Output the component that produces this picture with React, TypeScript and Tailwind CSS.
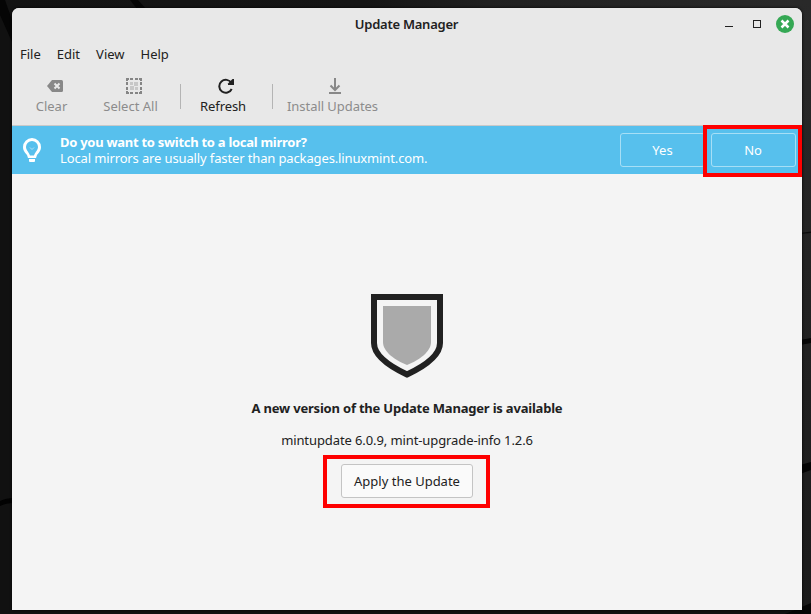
import type { ReactNode } from "react";

function Wallpaper() {
  return (
    <svg className="absolute inset-0" width="811" height="614" viewBox="0 0 811 614">
      <defs>
        <linearGradient id="top" x1="0" x2="1" y1="0" y2="0">
          <stop offset="0" stopColor="#131313" />
          <stop offset="0.45" stopColor="#151515" />
          <stop offset="0.6" stopColor="#202020" />
          <stop offset="1" stopColor="#2a2a2a" />
        </linearGradient>
        <linearGradient id="right" x1="0" x2="0" y1="0" y2="1">
          <stop offset="0" stopColor="#292929" />
          <stop offset="1" stopColor="#1b1b1b" />
        </linearGradient>
      </defs>
      <rect width="811" height="614" fill="#111" />
      <rect width="811" height="12" fill="url(#top)" />
      <rect x="795" width="16" height="608" fill="url(#right)" />
      <path d="M0 0h5l7 20v22L0 15z" fill="#050505" />
      <path d="M130 0h8l8 9h-9z" fill="#050505" />
      <path d="M0 501q6-3 14-3v5q-8 0-14 3z" fill="#020202" />
      <path d="M800 233l11-1.500v1.500l-11 1z" fill="#0b0b0b" />
      <path d="M800 340l11-2v5l-11 2z" fill="#060606" />
      <path d="M800 465l11-3v8l-11 4z" fill="#040404" />
      <path d="M790 612l21-9v11H785z" fill="#060606" />
    </svg>
  );
}

function MenuItem({ children }: { children: ReactNode }) {
  return <span className="whitespace-nowrap">{children}</span>;
}

function ToolButton({ label, className, icon }: { label: string; className: string; icon: ReactNode }) {
  return (
    <div className={"flex flex-col items-center whitespace-nowrap " + className}>
      <div className="flex h-5 items-center">{icon}</div>
      <span className="leading-5">{label}</span>
    </div>
  );
}

export default function App() {
  return (
    <div className="relative h-[614px] w-[811px] overflow-hidden bg-[#111] font-['Noto_Sans',sans-serif] text-[13px] text-[#212121]">
      <Wallpaper />
      <div className="relative ml-3 flex h-[610px] w-[790px] flex-col pt-2">
        <div className="flex min-h-0 flex-1 flex-col overflow-hidden rounded-t-[7px] bg-[#f4f4f4] shadow-[0_0_3px_#000]">
          <header className="h-[118px] shrink-0 border-b border-[#c9c9c9] bg-[#e8e8e8]">
            <div className="grid h-8 grid-cols-[1fr_auto_1fr] items-center pr-2">
              <span />
              <span className="pl-[7px] pt-0.5 text-[13px] font-semibold tracking-[-0.25px]">Update Manager</span>
              <div className="flex items-center justify-end">
                <svg width="69" height="18" viewBox="0 0 69 18" fill="none">
                  <path d="M0 11.500h8" stroke="#212121" />
                  <rect x="28.500" y="5.500" width="7" height="7" stroke="#212121" />
                  <circle cx="60" cy="9" r="9" fill="#35a854" />
                  <path d="M56.500 5.500l7 7m0-7l-7 7" stroke="#fff" strokeWidth="2.500" />
                </svg>
              </div>
            </div>
            <nav className="flex h-7 items-center gap-4 pl-2 pt-0.5">
              <MenuItem>File</MenuItem>
              <MenuItem>Edit</MenuItem>
              <MenuItem>View</MenuItem>
              <MenuItem>Help</MenuItem>
            </nav>
            <div className="flex items-start pt-2">
              <ToolButton
                label="Clear"
                className="ml-[14px] w-[51px] text-[#8c8c8c]"
                icon={
                  <svg className="ml-1.5" width="16" height="16" viewBox="0 0 16 16">
                    <path d="M5 2h9.500Q16 2 16 3.500v9q0 1.500-1.500 1.500H5L0 8z" fill="#888" />
                    <path d="M7.500 5.500l5 5m0-5l-5 5" stroke="#e8e8e8" strokeWidth="2" />
                  </svg>
                }
              />
              <ToolButton
                label="Select All"
                className="ml-[14px] w-[79px] text-[#8c8c8c]"
                icon={
                  <svg className="ml-1.5" width="16" height="16" viewBox="0 0 16 16" fill="#858585">
                    <path d="M0 0h3v2H2v1H0zM4 0h3v2H4zM9 0h3v2H9zM13 0h3v3h-2V2h-1zM0 4h2v3H0zM0 9h2v3H0zM14 4h2v3h-2zM14 9h2v3h-2zM0 13h2v1h1v2H0zM4 14h3v2H4zM9 14h3v2H9zM14 13h2v3h-3v-2h1z" />
                    <path d="M4 4h3v3H4zM8 4h4v4H8zM4 8h4v4H4zM9 9h3v3H9z" fill="#c7c7c7" />
                  </svg>
                }
              />
              <div className="ml-[10px] mt-2 h-[25px] w-px bg-[#b4b4b4]" />
              <ToolButton
                label="Refresh"
                className="ml-[9px] w-[66px] tracking-[-0.1px]"
                icon={
                  <svg className="ml-[5px]" width="16" height="16" viewBox="0 0 16 16" fill="none">
                    <path d="M13.700 11a6.500 6.500 0 1 1-.3-6" stroke="#212121" strokeWidth="2" />
                    <path d="M16 1v6h-6V5.500L14.500 1z" fill="#212121" />
                  </svg>
                }
              />
              <div className="ml-4 mt-2 h-[25px] w-px bg-[#b4b4b4]" />
              <ToolButton
                label="Install Updates"
                className="ml-[4px] w-[111px] tracking-[-0.05px] text-[#8c8c8c]"
                icon={
                  <svg className="ml-1" width="16" height="16" viewBox="0 0 16 16" fill="none" stroke="#888" strokeWidth="2">
                    <path d="M8 0v12M3.500 7.500L8 12l4.500-4.500M2 15h12" />
                  </svg>
                }
              />
            </div>
          </header>
          <section className="flex h-12 shrink-0 items-center bg-[#57c0ed] text-white">
            <svg className="ml-[11px]" width="18" height="24" viewBox="0 0 18 24">
              <path
                d="M9 0a9 9 0 0 1 9 9c0 4-2.500 6-4 8l-1 3H5l-1-3C2.500 15 0 13 0 9a9 9 0 0 1 9-9zM9 3a6 6 0 0 0-6 6c0 3 2.500 4.500 4 8.500h4C12.500 13.500 15 12 15 9a6 6 0 0 0-6-6z"
                fill="#fff"
                fillRule="evenodd"
              />
              <path d="M6 21h6v2q0 1-1 1H7q-1 0-1-1z" fill="#fff" />
              <path d="M7 9.500l2 2 2-2" fill="none" stroke="#b3e2f7" />
            </svg>
            <div className="ml-[19px] flex flex-col whitespace-nowrap leading-4">
              <span className="font-bold tracking-[-0.28px]">Do you want to switch to a local mirror?</span>
              <span className="tracking-[-0.13px]">Local mirrors are usually faster than packages.linuxmint.com.</span>
            </div>
            <div className="ml-auto mr-1.5 flex gap-1.5">
              <button className="h-[34px] w-[85px] rounded-[3px] border border-[#a6dff6] pt-0.5">Yes</button>
              <button className="relative h-[34px] w-[85px] rounded-[3px] border border-[#a6dff6] pr-px pt-0.5">
                No
                <span className="absolute -left-[9px] -top-[9px] h-[52px] w-[99px] border-4 border-[#fe0000]" />
              </button>
            </div>
          </section>
          <main className="flex flex-1 flex-col items-center pt-[120px]">
            <svg width="72" height="84" viewBox="0 0 72 84">
              <path d="M3 3h66v46c0 13-15 23-33 31.500C18 72 3 62 3 49z" fill="#f4f4f4" stroke="#212121" strokeWidth="6" />
              <path d="M12 12h48v36c0 10-12 18-24 23C24 66 12 58 12 48z" fill="#aaa" />
            </svg>
            <h1 className="mt-5 whitespace-nowrap font-bold leading-5 tracking-[-0.2px]">A new version of the Update Manager is available</h1>
            <p className="mt-3 whitespace-nowrap leading-5 tracking-[-0.1px]">mintupdate 6.0.9, mint-upgrade-info 1.2.6</p>
            <button className="relative mt-[14px] h-[34px] w-[132px] whitespace-nowrap rounded-[3px] border border-[#c4c4c4] bg-[#fafafa] pt-0.5">
              Apply the Update
              <span className="absolute -left-[19px] -top-[10px] h-[53px] w-[167px] border-4 border-[#fe0000]" />
            </button>
          </main>
        </div>
      </div>
    </div>
  );
}
